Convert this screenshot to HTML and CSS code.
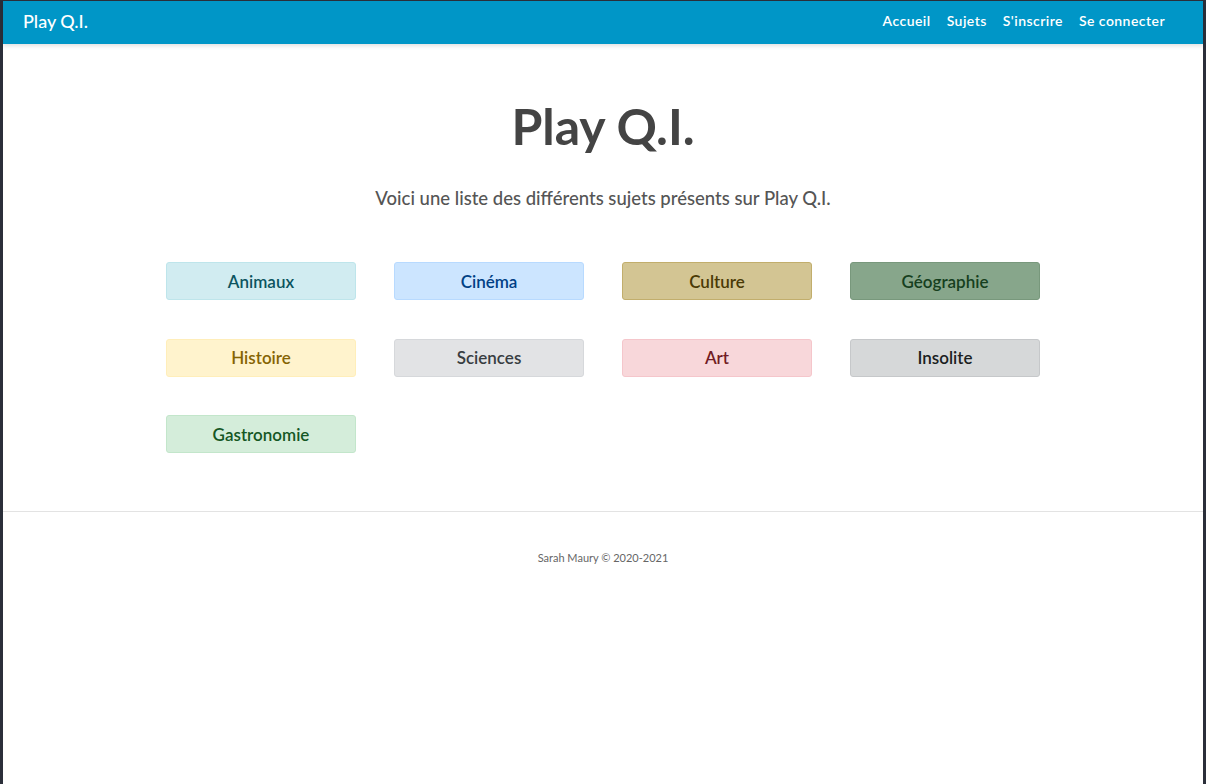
FILE: index.html
```html
<!DOCTYPE html>
<html lang="fr">
<head>
<meta charset="utf-8">
<title>Play Q.I.</title>
<link rel="stylesheet" href="styles.css">
</head>
<body>
<div class="frame">
  <nav class="navbar">
    <a class="brand" href="#">Play Q.I.</a>
    <ul class="nav-links">
      <li><a href="#">Accueil</a></li>
      <li><a href="#">Sujets</a></li>
      <li><a href="#">S'inscrire</a></li>
      <li><a href="#">Se connecter</a></li>
    </ul>
  </nav>
  <main class="main">
    <h1 class="title">Play Q.I.</h1>
    <p class="lead">Voici une liste des différents sujets présents sur Play Q.I.</p>
    <div class="subjects">
      <a class="subject s-info" href="#">Animaux</a>
      <a class="subject s-primary" href="#">Cinéma</a>
      <a class="subject s-khaki" href="#">Culture</a>
      <a class="subject s-sage" href="#">Géographie</a>
      <a class="subject s-warning" href="#">Histoire</a>
      <a class="subject s-secondary" href="#">Sciences</a>
      <a class="subject s-danger" href="#">Art</a>
      <a class="subject s-dark" href="#">Insolite</a>
      <a class="subject s-success" href="#">Gastronomie</a>
    </div>
  </main>
  <footer class="footer">
    <p>Sarah Maury © 2020-2021</p>
  </footer>
</div>
</body>
</html>
```
FILE: styles.css
```css
html, body {
  margin: 0;
  padding: 0;
  height: 100%;
}
body {
  background: #2b2f3a;
  font-family: Lato, "Open Sans", sans-serif;
}
.frame {
  box-sizing: border-box;
  margin: 1px 3px 0 3px;
  min-height: calc(100% - 1px);
  background: #fff;
}
.navbar {
  box-sizing: border-box;
  height: 43px;
  background: #0096c7;
  display: flex;
  align-items: center;
  justify-content: space-between;
  padding: 0 38px 4px 20px;
  box-shadow: 0 2px 4px rgba(0,0,0,0.12);
  position: relative;
}
.brand {
  color: #fff;
  text-decoration: none;
  font-size: 18px;
  font-weight: 500;
}
.nav-links {
  list-style: none;
  margin: 0;
  padding: 0 0 2px;
  display: flex;
  gap: 16px;
}
.nav-links a {
  color: #fff;
  text-decoration: none;
  font-size: 14px;
  font-weight: 600;
  letter-spacing: 0.45px;
}
.main {
  padding-top: 52px;
  padding-bottom: 58px;
  text-align: center;
}
.title {
  margin: 0;
  font-size: 50px;
  font-weight: 700;
  color: #444;
  line-height: 60px;
}
.lead {
  margin: 30px 0 0;
  font-size: 18.5px;
  font-weight: 500;
  color: #555;
  line-height: 24px;
}
.subjects {
  width: 874px;
  margin: 52px auto 0;
  display: grid;
  grid-template-columns: repeat(4, 190px);
  column-gap: 38px;
  row-gap: 38.5px;
}
.subject {
  box-sizing: border-box;
  height: 38px;
  display: flex;
  align-items: center;
  justify-content: center;
  border: 1px solid;
  border-radius: 3px;
  text-decoration: none;
  font-size: 17px;
  font-weight: 600;
}
.s-info { background: #d1ecf1; border-color: #bee5eb; color: #0c5460; }
.s-primary { background: #cce5ff; border-color: #b8daff; color: #004085; }
.s-khaki { background: #d3c593; border-color: #c2ae6c; color: #4a3a05; }
.s-sage { background: #87a68b; border-color: #78987c; color: #163f1e; }
.s-warning { background: #fff3cd; border-color: #ffeeba; color: #856404; }
.s-secondary { background: #e2e3e5; border-color: #d6d8db; color: #383d41; }
.s-danger { background: #f8d7da; border-color: #f5c6cb; color: #721c24; }
.s-dark { background: #d6d8d9; border-color: #c6c8ca; color: #1b1e21; }
.s-success { background: #d4edda; border-color: #c3e6cb; color: #155724; }
.footer {
  border-top: 1px solid #e3e3e3;
  text-align: center;
  padding-top: 39px;
}
.footer p {
  margin: 0;
  font-size: 11px;
  color: #666;
}
```
